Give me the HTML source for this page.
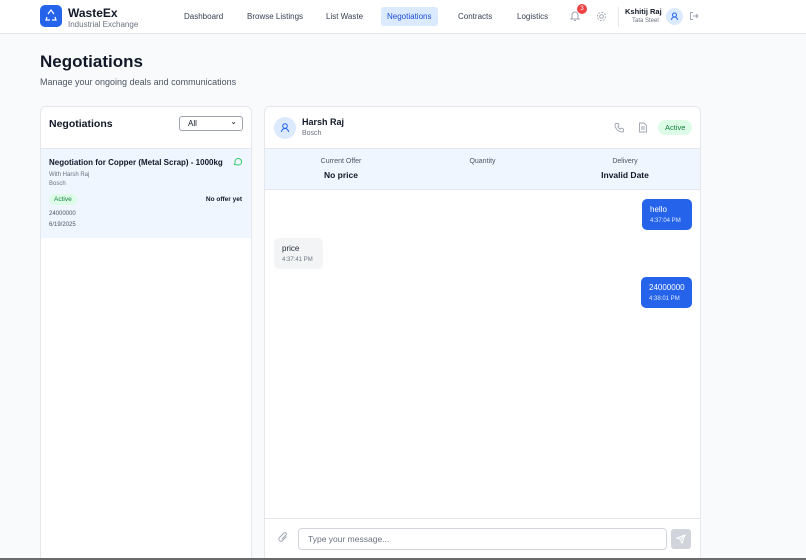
<!DOCTYPE html>
<html><head><meta charset="utf-8"><style>
*{box-sizing:border-box;margin:0;padding:0}
html,body{width:806px;height:560px;overflow:hidden}
body{background:#f9fafb;font-family:"Liberation Sans",sans-serif;color:#111827;position:relative}
.nav{position:absolute;left:0;top:0;width:806px;height:34px;background:#fff;border-bottom:1px solid #e5e7eb}
.logo{position:absolute;left:40px;top:5px;width:22px;height:22px;background:#2563eb;border-radius:5px}
.brand{position:absolute;left:68px;top:6px;font-weight:bold;font-size:12px}
.brand2{position:absolute;left:68px;top:20px;font-size:8px;color:#6b7280}
.ni{position:absolute;top:7px;height:19px;line-height:19px;font-size:8px;color:#374151;padding:0 6px;border-radius:3px}
.ni.a{background:#dbeafe;color:#1d4ed8}
.panel{position:absolute;background:#fff;border:1px solid #e5e7eb;border-radius:6px}
.sm{font-size:7px;color:#6b7280}
.bub{position:absolute;border-radius:5px;padding:6px 8px;font-size:8px}
.bub .t{font-size:6px;margin-top:4px}
</style></head><body>
<div class="nav">
<div class="logo"><svg width="22" height="22" viewBox="0 0 22 22" fill="none" stroke="#fff" stroke-width="1.2"><path d="M8 9l3-4 3 4M7 12l-1 3h4M15 12l1 3h-4"/></svg></div>
<div class="brand">WasteEx</div><div class="brand2">Industrial Exchange</div>
<div class="ni" style="left:178px">Dashboard</div>
<div class="ni" style="left:241px">Browse Listings</div>
<div class="ni" style="left:320px">List Waste</div>
<div class="ni a" style="left:381px;width:57px">Negotiations</div>
<div class="ni" style="left:452px">Contracts</div>
<div class="ni" style="left:511px">Logistics</div>
<svg style="position:absolute;left:569px;top:10px" width="12" height="12" viewBox="0 0 12 12" fill="none" stroke="#9ca3af" stroke-width="1"><path d="M3 8V5a3 3 0 016 0v3l1 1H2zM5 10.5h2"/></svg>
<div style="position:absolute;left:577px;top:4px;width:10px;height:10px;border-radius:5px;background:#ef4444;color:#fff;font-size:6px;text-align:center;line-height:10px">3</div>
<svg style="position:absolute;left:596px;top:11px" width="11" height="11" viewBox="0 0 12 12" fill="none" stroke="#9ca3af" stroke-width="1"><circle cx="6" cy="6" r="2"/><circle cx="6" cy="6" r="4.5" stroke-dasharray="2 1.5"/></svg>
<div style="position:absolute;left:618px;top:7px;width:1px;height:20px;background:#e5e7eb"></div>
<div style="position:absolute;left:625px;top:7px;font-size:7.5px;font-weight:bold">Kshitij Raj</div>
<div style="position:absolute;left:632px;top:18px;font-size:6px;color:#6b7280">Tata Steel</div>
<div style="position:absolute;left:666px;top:8px;width:17px;height:17px;border-radius:9px;background:#dbeafe"><svg width="17" height="17" viewBox="0 0 17 17" fill="none" stroke="#2563eb"><circle cx="8.5" cy="7" r="2"/><path d="M5.5 12a3 3 0 016 0"/></svg></div>
<svg style="position:absolute;left:689px;top:11px" width="10" height="10" viewBox="0 0 10 10" fill="none" stroke="#9ca3af" stroke-width=".9"><path d="M4 1.5H1.5v7H4M4 5h5M7 3l2 2-2 2"/></svg>
</div>
<div style="position:absolute;left:40px;top:52px;font-size:17px;font-weight:bold">Negotiations</div>
<div style="position:absolute;left:40px;top:77px;font-size:9px;color:#4b5563">Manage your ongoing deals and communications</div>

<div class="panel" style="left:40px;top:106px;width:212px;height:460px;overflow:hidden">
<div style="position:absolute;left:8px;top:11px;font-size:10.5px;font-weight:bold">Negotiations</div>
<div style="position:absolute;left:138px;top:9px;width:64px;height:15px;border:1px solid #9ca3af;border-radius:3px;font-size:8px;padding:2px 8px">All<span style="position:absolute;right:5px;top:0;font-size:8px">⌄</span></div>
<div style="position:absolute;left:0;top:41px;width:212px;height:90px;background:#eff6ff;border-top:1px solid #e5e7eb"></div>
<div style="position:absolute;left:8px;top:51px;font-size:8px;font-weight:bold">Negotiation for Copper (Metal Scrap) - 1000kg</div>
<svg style="position:absolute;left:192px;top:50px" width="9" height="9" viewBox="0 0 9 9" fill="none" stroke="#22c55e" stroke-width=".9"><path d="M1.5 7.5l.6-1.8A3.3 3.3 0 114 7.8z"/></svg>
<div class="sm" style="position:absolute;left:8px;top:65px;font-size:6px">With Harsh Raj</div>
<div class="sm" style="position:absolute;left:8px;top:74px;font-size:6px">Bosch</div>
<div style="position:absolute;left:8px;top:87px;background:#dcfce7;color:#15803d;font-size:6.5px;padding:2px 5px;border-radius:6px">Active</div>
<div style="position:absolute;right:9px;top:89px;font-size:6.5px;font-weight:bold">No offer yet</div>
<div style="position:absolute;left:8px;top:104px;font-size:6px;color:#4b5563">24000000</div>
<div style="position:absolute;left:8px;top:115px;font-size:6px;color:#4b5563">6/19/2025</div>
</div>

<div class="panel" style="left:264px;top:106px;width:437px;height:460px;overflow:hidden">
<div style="position:absolute;left:9px;top:10px;width:22px;height:22px;border-radius:11px;background:#dbeafe"><svg width="22" height="22" viewBox="0 0 22 22" fill="none" stroke="#2563eb"><circle cx="11" cy="9" r="2.3"/><path d="M7.5 15a3.5 3.5 0 017 0"/></svg></div>
<div style="position:absolute;left:37px;top:10px;font-size:9px;font-weight:bold">Harsh Raj</div>
<div style="position:absolute;left:37px;top:23px;font-size:7px;color:#6b7280">Bosch</div>
<svg style="position:absolute;left:349px;top:15px" width="11" height="11" viewBox="0 0 11 11" fill="none" stroke="#9ca3af" stroke-width=".9"><path d="M2 1.5h2l1 2.5-1.2.8a6 6 0 002.4 2.4l.8-1.2 2.5 1v2A1 1 0 018.5 10 7.5 7.5 0 011 2.5a1 1 0 011-1z"/></svg>
<svg style="position:absolute;left:373px;top:15px" width="10" height="11" viewBox="0 0 10 11" fill="none" stroke="#9ca3af" stroke-width=".9"><path d="M1.5 1h4.5l2.5 2.5v6.5h-7zM3 5h4M3 7h4"/></svg>
<div style="position:absolute;left:393px;top:13px;background:#dcfce7;color:#15803d;font-size:7.5px;padding:3px 7px;border-radius:8px">Active</div>
<div style="position:absolute;left:0;top:41px;width:437px;height:42px;background:#eff6ff;border-top:1px solid #e5e7eb;border-bottom:1px solid #e5e7eb"></div>
<div style="position:absolute;left:0;top:51px;width:152px;text-align:center;font-size:7px;color:#4b5563">Current Offer</div>
<div style="position:absolute;left:0;top:63px;width:152px;text-align:center;font-size:8.5px;font-weight:bold">No price</div>
<div style="position:absolute;left:145px;top:51px;width:145px;text-align:center;font-size:7px;color:#4b5563">Quantity</div>
<div style="position:absolute;left:290px;top:51px;width:140px;text-align:center;font-size:7px;color:#4b5563">Delivery</div>
<div style="position:absolute;left:290px;top:63px;width:140px;text-align:center;font-size:8.5px;font-weight:bold">Invalid Date</div>
<div class="bub" style="left:377px;top:92px;width:50px;height:31px;background:#2563eb;color:#fff">hello<div class="t" style="color:#dbeafe">4:37:04 PM</div></div>
<div class="bub" style="left:9px;top:131px;width:49px;height:31px;background:#f3f4f6;color:#1f2937">price<div class="t" style="color:#6b7280">4:37:41 PM</div></div>
<div class="bub" style="left:376px;top:170px;width:51px;height:31px;background:#2563eb;color:#fff">24000000<div class="t" style="color:#dbeafe">4:38:01 PM</div></div>
<div style="position:absolute;left:0;top:411px;width:437px;border-top:1px solid #e5e7eb"></div>
<svg style="position:absolute;left:13px;top:425px" width="11" height="11" viewBox="0 0 11 11" fill="none" stroke="#9ca3af" stroke-width=".9"><path d="M8.5 4.5L4.5 8.5a2 2 0 01-3-3l4.5-4.5a1.4 1.4 0 012 2L3.8 7.2"/></svg>
<div style="position:absolute;left:33px;top:421px;width:369px;height:22px;border:1px solid #d1d5db;border-radius:4px;font-size:8.5px;color:#6b7280;padding:5px 9px">Type your message...</div>
<div style="position:absolute;left:406px;top:422px;width:20px;height:20px;border-radius:3px;background:#d1d5db"><svg width="20" height="20" viewBox="0 0 20 20" fill="none" stroke="#fff" stroke-width="1"><path d="M14 6l-8 3 3.5 1.5L11 14zM9.5 10.5L14 6"/></svg></div>
</div>
<div style="position:absolute;left:0;top:558px;width:806px;height:2px;background:#6b6b6b"></div>
</body></html>
